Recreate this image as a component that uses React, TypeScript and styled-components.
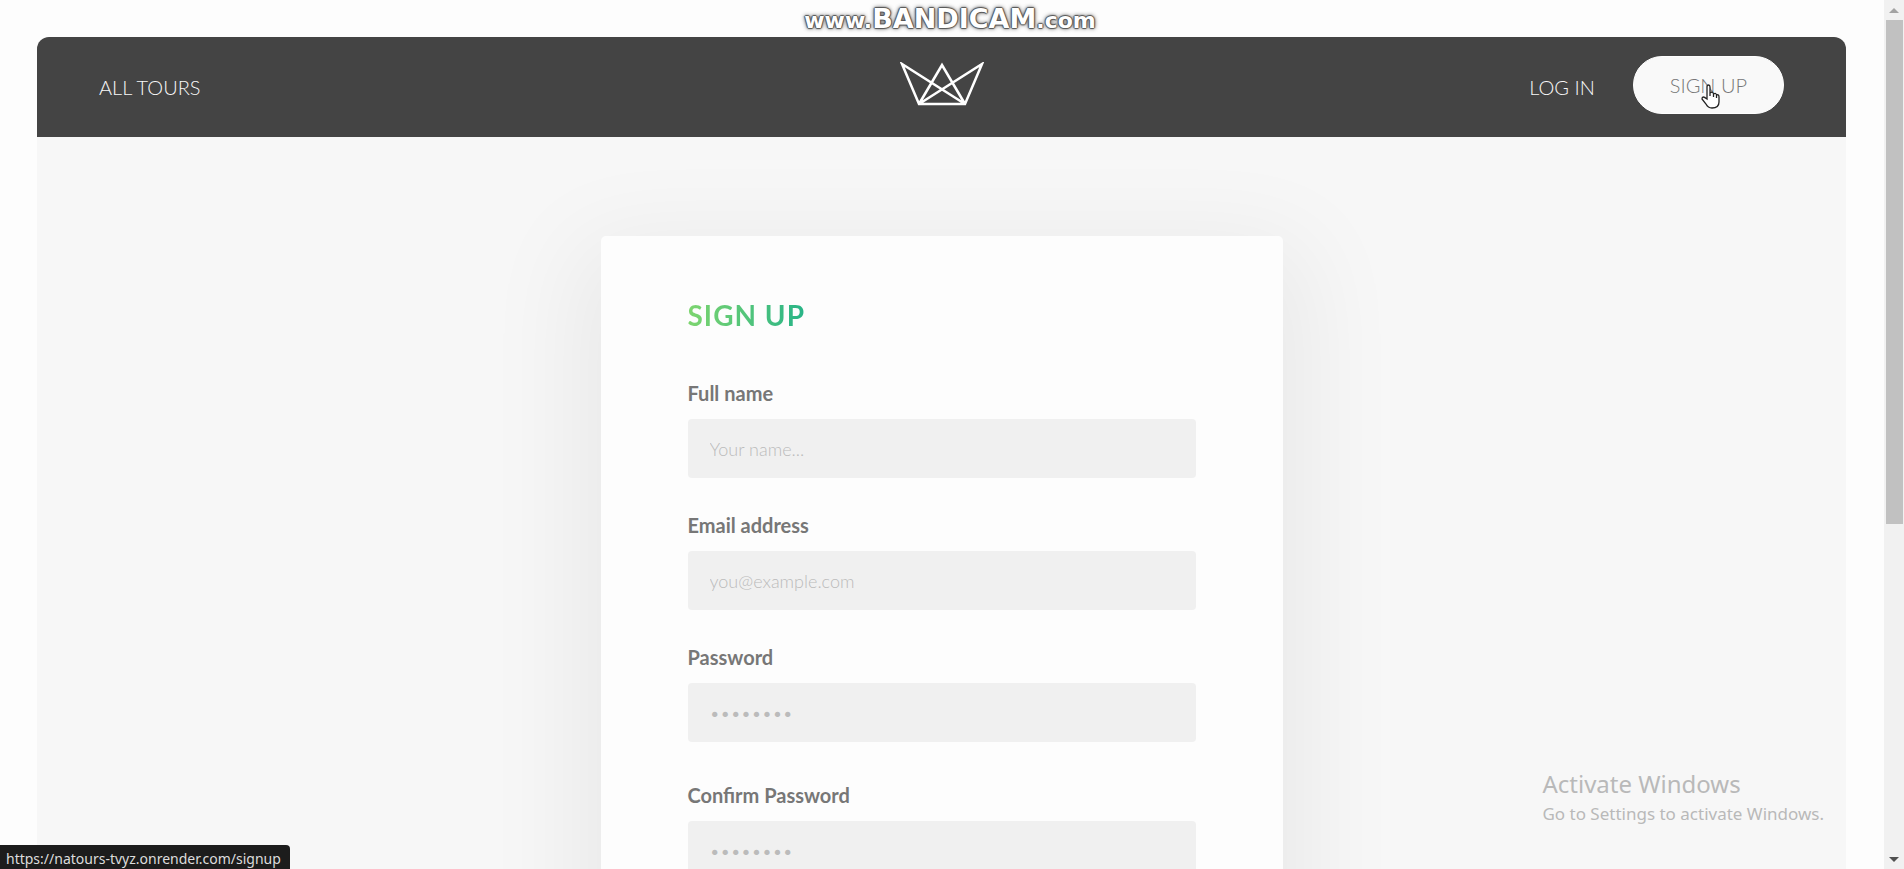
import React from 'react';
import styled, { createGlobalStyle } from 'styled-components';

const GlobalStyle = createGlobalStyle`
  *, *::before, *::after { box-sizing: border-box; margin: 0; padding: 0; }
  body { font-family: Lato, "Liberation Sans", sans-serif; font-weight: 300; color: #777; background: #fdfdfd; }
`;

const Window = styled.div`
  display: flex;
  height: 100vh;
  overflow: hidden;
  position: relative;
`;

const Page = styled.div`
  flex: 1;
  min-width: 0;
  padding: 37px 38px 0 37px;
`;

const Header = styled.header`
  display: grid;
  grid-template-columns: 1fr auto 1fr;
  align-items: center;
  height: 100px;
  padding: 0 62px;
  background: #444;
  border-radius: 12px 12px 0 0;
`;

const Nav = styled.nav<{ $end?: boolean }>`
  display: flex;
  align-items: center;
  justify-content: ${(p) => (p.$end ? 'flex-end' : 'flex-start')};
  gap: 38px;
`;

const NavLink = styled.a`
  color: #f7f7f7;
  font-size: 20px;
  line-height: 24px;
  text-transform: uppercase;
  text-decoration: none;
`;

const SignUpLink = styled(NavLink)`
  padding: 16px 36px;
  margin-bottom: 4px;
  border: 1px solid #fff;
  border-radius: 100px;
  background: #f9f9f9;
  color: #777;
`;

const Crown = styled.svg`
  display: block;
  width: 84px;
  height: 44px;
  margin-bottom: 6px;
`;

const Main = styled.main`
  min-height: 100vh;
  padding: 99px 75px;
  background: #f7f7f7;
`;

const Card = styled.form`
  width: 100%;
  max-width: 682px;
  margin: 0 auto;
  padding: 61px 87px 88px;
  background: #fdfdfd;
  border-radius: 5px;
  box-shadow: 0 31px 100px 25px rgba(0, 0, 0, 0.06);
`;

const Title = styled.h2`
  width: fit-content;
  margin-bottom: 46px;
  font-size: 28px;
  line-height: 36px;
  font-weight: 700;
  letter-spacing: 1px;
  text-transform: uppercase;
  color: transparent;
  background: linear-gradient(to right, #7dd56f, #28b487);
  background-clip: text;
  -webkit-background-clip: text;
`;

const Field = styled.div<{ $gap: number }>`
  display: flex;
  flex-direction: column;
  gap: 12px;
  margin-bottom: ${(p) => p.$gap}px;
`;

const Label = styled.label`
  font-size: 20px;
  line-height: 28px;
  font-weight: 700;
`;

const Input = styled.input`
  width: 100%;
  height: 59px;
  padding: 0 22px;
  border: 0;
  border-radius: 4px;
  background: #f0f0f0;
  color: inherit;
  font: inherit;
  font-size: 18px;
  outline: none;
  &::placeholder { color: #bbb; opacity: 1; }
`;

const Scrollbar = styled.div`
  display: flex;
  flex-direction: column;
  align-items: center;
  width: 20px;
  background: #f1f1f1;
`;

const Thumb = styled.div`
  flex: 0 0 58%;
  width: 17px;
  background: #c1c1c1;
`;

const Arrow = styled.svg`
  display: block;
  flex: none;
  width: 20px;
  height: 20px;
  &:last-child { margin-top: auto; }
`;

const Recorder = styled.div`
  position: absolute;
  top: 3px;
  left: 0;
  right: 4px;
  text-align: center;
  font-family: "DejaVu Sans", sans-serif;
  font-weight: 700;
  font-size: 22px;
  line-height: 32px;
  color: #fff;
  text-shadow: 1px 0 1px #555, -1px 0 1px #555, 0 1px 1px #555, 0 -1px 1px #555, 0 0 4px #777, 0 0 5px #999;
  pointer-events: none;
`;

const RecorderName = styled.span`
  font-size: 27px;
`;

const Activation = styled.aside`
  position: absolute;
  right: 80px;
  bottom: 42px;
  font-family: "Noto Sans", sans-serif;
  font-weight: 400;
  font-size: 17px;
  line-height: 26px;
  color: #b9b9b9;
  pointer-events: none;
`;

const ActivationTitle = styled.p`
  font-size: 24px;
  line-height: 34px;
`;

const LinkStatus = styled.div`
  position: absolute;
  left: 0;
  bottom: 0;
  height: 24px;
  padding: 0 9px 0 6px;
  border-radius: 0 4px 0 0;
  background: #1c1c1c;
  color: #ddd;
  font-family: "Noto Sans", sans-serif;
  font-weight: 400;
  font-size: 14px;
  line-height: 28px;
`;

const Pointer = styled.svg`
  position: absolute;
  top: 84px;
  right: 184px;
  width: 19px;
  height: 26px;
  pointer-events: none;
`;

const fields = [
  { id: 'name', label: 'Full name', type: 'text', placeholder: 'Your name...', gap: 33 },
  { id: 'email', label: 'Email address', type: 'email', placeholder: 'you@example.com', gap: 33 },
  { id: 'password', label: 'Password', type: 'password', placeholder: '••••••••', gap: 39 },
  { id: 'confirm', label: 'Confirm Password', type: 'password', placeholder: '••••••••', gap: 39 },
];

export default function App() {
  return (
    <>
      <GlobalStyle />
      <Window>
        <Page>
          <Header>
            <Nav>
              <NavLink href="#tours">All tours</NavLink>
            </Nav>
            <Crown viewBox="0 0 84 44" fill="none" stroke="#fff" strokeWidth="2.500" aria-label="Natours">
              <path d="M19 42 L2 2 L65 42 L42 3 L19 42 L82 2 L65 42 Z" />
            </Crown>
            <Nav $end>
              <NavLink href="#login">Log in</NavLink>
              <SignUpLink href="#signup">Sign up</SignUpLink>
            </Nav>
          </Header>
          <Main>
            <Card>
              <Title>Sign up</Title>
              {fields.map((f) => (
                <Field key={f.id} $gap={f.gap}>
                  <Label htmlFor={f.id}>{f.label}</Label>
                  <Input id={f.id} type={f.type} placeholder={f.placeholder} />
                </Field>
              ))}
            </Card>
          </Main>
        </Page>
        <Scrollbar aria-hidden="true">
          <Arrow viewBox="0 0 20 20"><path d="M5 13 L10 8 L15 13 Z" fill="#a3a3a3" /></Arrow>
          <Thumb />
          <Arrow viewBox="0 0 20 20"><path d="M5 8 L15 8 L10 13 Z" fill="#505050" /></Arrow>
        </Scrollbar>
        <Recorder>www.<RecorderName>BANDICAM</RecorderName>.com</Recorder>
        <Activation>
          <ActivationTitle>Activate Windows</ActivationTitle>
          <p>Go to Settings to activate Windows.</p>
        </Activation>
        <LinkStatus>https://natours-tvyz.onrender.com/signup</LinkStatus>
        <Pointer viewBox="0 0 19 26">
          <path d="M6 15 V3 Q6 1 7.500 1 Q9 1 9 3 V9 Q12 7 12.500 10 Q15 8.500 15.500 11 Q18 10 18 13 V18 Q18 24 11 24 Q7 24 5 20 L1 15 Q1 11 6 15 Z M9 9 V12 M12.500 10 V13 M15.500 11 V14" fill="#fff" stroke="#222" strokeWidth="1.300" />
        </Pointer>
      </Window>
    </>
  );
}
